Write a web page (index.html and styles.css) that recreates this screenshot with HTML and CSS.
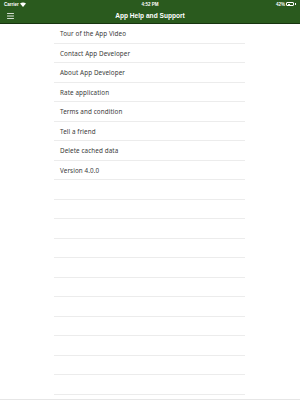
FILE: index.html
```html
<!DOCTYPE html>
<html lang="en">
<head>
    <meta charset="UTF-8">
    <meta name="viewport" content="width=device-width, initial-scale=1.0">
    <title>App Help and Support</title>
    <link rel="stylesheet" href="styles.css">
</head>
<body>
    <header class="top-bar">
        <div class="status-bar">
            <span class="carrier">Carrier
                <svg class="wifi" viewBox="0 0 10 8" width="6" height="5"><path d="M5 8 L0 2.5 Q5 -1.5 10 2.5 Z" fill="#fff"/></svg>
            </span>
            <span class="clock">4:52 PM</span>
            <span class="battery">42%
                <span class="battery-body"><span class="battery-fill"></span></span><span class="battery-tip"></span>
            </span>
        </div>
        <div class="nav-bar">
            <span class="menu-icon">
                <svg viewBox="0 0 8 7" width="7" height="6"><path d="M0 0.5 H8 M0 3.5 H8 M0 6.5 H8" stroke="#fff" stroke-width="1"/></svg>
            </span>
            <h1>App Help and Support</h1>
        </div>
    </header>

    <ul class="menu-list">
        <li>Tour of the App Video</li>
        <li>Contact App Developer</li>
        <li>About App Developer</li>
        <li>Rate application</li>
        <li>Terms and condition</li>
        <li>Tell a friend</li>
        <li>Delete cached data</li>
        <li>Version 4.0.0</li>
        <li></li>
        <li></li>
        <li></li>
        <li></li>
        <li></li>
        <li></li>
        <li></li>
        <li></li>
        <li></li>
        <li></li>
        <li></li>
    </ul>
    <div class="bottom-line"></div>
</body>
</html>
```

FILE: styles.css
```css
/* App help screen */
body {
    margin: 0;
    padding: 0;
    background: #fff;
    font-family: 'Noto Sans', 'Open Sans', sans-serif;
    color: #333;
    width: 300px;
    height: 400px;
    overflow: hidden;
    position: relative;
}

.top-bar {
    background-color: #2a5a1e; /* forest green */
    border-bottom: 1px solid #173510;
    height: 24px;
    box-sizing: border-box;
    color: #fff;
}

.status-bar {
    display: flex;
    justify-content: space-between;
    align-items: center;
    height: 8px;
    padding: 0 4px;
    font-size: 4.5px;
    font-weight: bold;
    font-family: 'Liberation Sans', sans-serif;
}

.carrier, .battery {
    display: flex;
    align-items: center;
    gap: 1.5px;
    width: 40px;
}

.battery {
    justify-content: flex-end;
}

.battery-body {
    width: 8px;
    height: 3.5px;
    border: 0.6px solid #fff;
    border-radius: 1px;
    box-sizing: border-box;
    padding: 0.5px;
    display: flex;
}

.battery-fill {
    width: 45%;
    background: #fff;
}

.battery-tip {
    width: 1px;
    height: 1.6px;
    background: #fff;
    margin-left: -1px;
}

.nav-bar {
    display: flex;
    align-items: center;
    height: 15px;
}

.menu-icon {
    display: flex;
    margin-left: 7px;
}

.nav-bar h1 {
    flex: 1;
    margin: 0 0 0 -14px;
    text-align: center;
    font-size: 6.6px;
    font-weight: bold;
    font-family: 'Liberation Sans', sans-serif;
}

.menu-list {
    list-style: none;
    margin: 0 0 0 54px;
    padding: 0;
    width: 191px;
}

.menu-list li {
    height: 19.5px;
    box-sizing: border-box;
    border-bottom: 1px solid #ececec;
    padding-left: 6px;
    font-size: 6.3px;
    letter-spacing: 0.1px;
    line-height: 19px;
    color: #3a3a3a;
}

.bottom-line {
    position: absolute;
    left: 0;
    right: 0;
    bottom: 0;
    height: 1px;
    background: #e6e6e6;
}
```
